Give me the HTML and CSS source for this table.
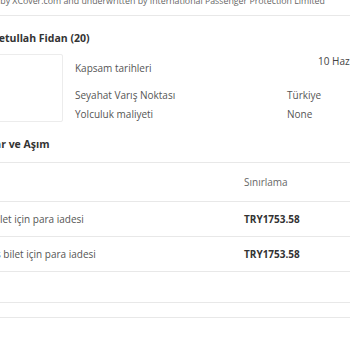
FILE: index.html
```html
<!DOCTYPE html>
<html lang="tr">
<head>
  <meta charset="UTF-8">
  <meta name="viewport" content="width=device-width, initial-scale=1.0">
  <title>Poliçe Detayları</title>
  <link rel="stylesheet" href="styles.css">
</head>
<body>

  <div class="page">
    <p class="provider">Provided by XCover.com and underwritten by International Passenger Protection Limited</p>

    <section class="traveller">
      <h2 class="traveller-name">Fetullah Fidan (20)</h2>
      <div class="traveller-body">
        <div class="photo"></div>
        <div class="details">
          <div class="detail-row detail-dates">
            <span class="detail-label">Kapsam tarihleri</span>
            <span class="detail-value">10 Haz 2024 - 17 Haz 2024</span>
          </div>
          <div class="detail-row detail-spaced">
            <span class="detail-label">Seyahat Varış Noktası</span>
            <span class="detail-value">Türkiye</span>
          </div>
          <div class="detail-row">
            <span class="detail-label">Yolculuk maliyeti</span>
            <span class="detail-value">None</span>
          </div>
        </div>
      </div>
    </section>

    <section class="cover">
      <h2 class="cover-title">Teminatlar ve Aşım</h2>
      <table class="cover-table">
        <colgroup>
          <col class="col-benefit">
          <col class="col-limit">
        </colgroup>
        <thead>
          <tr>
            <th></th>
            <th>Sınırlama</th>
          </tr>
        </thead>
        <tbody>
          <tr>
            <td>Gidiş bilet için para iadesi</td>
            <td class="amount">TRY1753.58</td>
          </tr>
          <tr>
            <td>Ek uçuş bilet için para iadesi</td>
            <td class="amount">TRY1753.58</td>
          </tr>
          <tr class="row-empty">
            <td></td>
            <td></td>
          </tr>
        </tbody>
      </table>
      <div class="cover-end"></div>
    </section>
  </div>

</body>
</html>
```

FILE: styles.css
```css
body {
  margin: 0;
  font-family: 'Open Sans', sans-serif;
  font-size: 10px;
  color: #555;
  background-color: #ffffff;
  overflow: hidden;
}
.page {
  width: 760px;
  margin: -6px 0 0 -80px;
}
.provider {
  margin: 0;
  padding: 0 0 7px 41.5px;
  font-size: 8.8px;
  line-height: 14px;
  color: #666;
  border-bottom: 1px solid #e8e8e8;
  white-space: nowrap;
}
h2 {
  margin: 0;
  font-size: 10.5px;
  line-height: 16px;
  font-weight: bold;
  color: #333;
}
.traveller-name {
  margin-top: 14px;
  padding-left: 73px;
}
.traveller-body {
  display: flex;
  gap: 12px;
  margin-top: 8px;
  padding-left: 73px;
}
.photo {
  width: 70px;
  height: 68px;
  box-sizing: border-box;
  border: 1px solid #ececec;
  border-radius: 2px;
}
.details {
  flex: 1;
}
.detail-row {
  display: flex;
  line-height: 15px;
}
.detail-label {
  width: 212px;
}
.detail-dates .detail-label {
  margin-top: 7px;
}
.detail-dates .detail-value {
  padding-left: 31px;
  color: #444;
  white-space: nowrap;
}
.detail-spaced {
  margin-top: 12px;
}
.detail-row + .detail-row:not(.detail-spaced) {
  margin-top: 4px;
}
.cover-title {
  margin-top: 14px;
  padding-left: 28px;
}
.cover-table {
  width: 700px;
  margin-top: 10px;
  border-collapse: collapse;
  table-layout: fixed;
}
.col-benefit {
  width: 324px;
}
.cover-table th,
.cover-table td {
  padding: 0;
  text-align: left;
  border-top: 1px solid #e8e8e8;
  border-bottom: 1px solid #e8e8e8;
  line-height: 15px;
  white-space: nowrap;
}
.cover-table th:first-child,
.cover-table td:first-child {
  padding-left: 45.5px;
}
.cover-table th {
  height: 38px;
  font-weight: normal;
  color: #666;
  vertical-align: middle;
}
.cover-table td {
  height: 34px;
  color: #555;
}
.cover-table .amount {
  font-weight: bold;
  color: #333;
}
.cover-table .row-empty td {
  height: 30px;
}
.cover-end {
  margin-top: 14px;
  border-top: 1px solid #e8e8e8;
}
```
